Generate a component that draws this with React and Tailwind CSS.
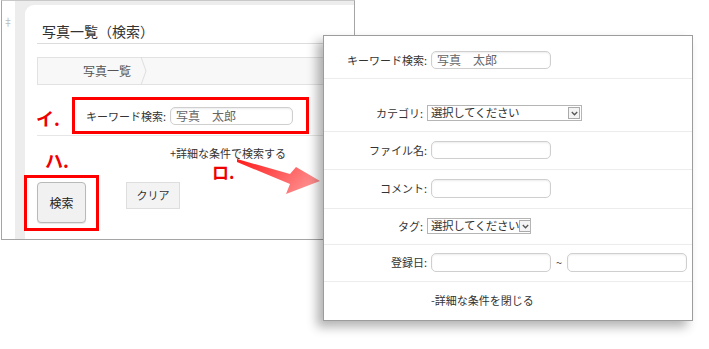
import React from "react";

const FONT = "font-['Noto_Sans_CJK_JP','Noto_Sans',sans-serif]";

function TextInput({ value = "", w = "w-[120px]", h = "h-[18px]" }) {
  return (
    <div
      className={`${w} ${h} rounded-[5px] border border-[#cfcfcf] bg-white shadow-[inset_0_1px_2px_rgba(0,0,0,0.08)] flex items-center pl-[5px] text-[12px] leading-none text-[#666] whitespace-nowrap`}
    >
      {value}
    </div>
  );
}

function Select({ w }) {
  return (
    <div
      className={`${w} h-[16px] border border-[#b5b5b5] bg-white flex items-center justify-between pl-[3px] pr-[1px] text-[11.5px] leading-none text-[#333] whitespace-nowrap overflow-hidden`}
    >
      <span className="tracking-[-0.4px]">選択してください</span>
      <span className="shrink-0 w-[12px] h-[12px] border border-[#aaa] bg-[#f4f4f4] flex items-center justify-center">
        <svg width="7" height="5" viewBox="0 0 7 5">
          <path d="M0.8 1 L3.5 3.8 L6.2 1" fill="none" stroke="#555" strokeWidth="1.3" />
        </svg>
      </span>
    </div>
  );
}

function Row({ label, children, cls, labelW = "w-[103px]" }) {
  return (
    <div className={`flex items-center border-b border-[#ececec] ${cls}`}>
      <div className={`${labelW} text-right text-[11px] leading-none text-[#333] whitespace-nowrap`}>{label}</div>
      <div className="ml-[4px] flex items-center">{children}</div>
    </div>
  );
}

export default function App() {
  return (
    <div className={`relative w-[709px] h-[349px] bg-white overflow-hidden ${FONT}`}>
      {/* Left window */}
      <div className="ml-[1px] w-[354px] h-[240px] border border-[#a5a5a5] border-t-[#c8c8c8] bg-[#ededed] flex">
        <div className="w-[13px] bg-white pt-[16px] pl-[1px] text-[10px] leading-none text-[#bbb]">‡</div>
        <div className="w-[10px] bg-[#ededed]" />
        <div className="flex-1 mt-[4px] bg-white rounded-tl-[9px] pl-[12px] flex flex-col">
          <div className="pt-[16px] pb-[2px] pl-[5px] border-b border-[#dcdcdc] text-[14px] leading-[20px] text-[#333]">
            写真一覧（検索）
          </div>
          <div className="relative mt-[13px] h-[28px] border border-[#e2e2e2] bg-[#f8f8f8] flex items-center pl-[45px] text-[12px] text-[#555]">
            写真一覧
            <svg className="absolute left-[102px] top-[-1px]" width="8" height="28" viewBox="0 0 8 28">
              <path d="M1 0 L6 14 L1 28" fill="none" stroke="#dedede" strokeWidth="1" />
            </svg>
          </div>
          <div className="h-[51px] pt-[12px] border-b border-[#e6e6e6] flex items-center pl-[49px]">
            <span className="text-[11px] leading-none text-[#333]">キーワード検索:</span>
            <div className="ml-[4px]">
              <TextInput value="写真　太郎" w="w-[123px]" />
            </div>
          </div>
          <div className="pt-[9px] pl-[133px] text-[11px] leading-[16px] text-[#333]">+詳細な条件で検索する</div>
          <div className="mt-[21px] flex items-start">
            <div className="w-[49px] h-[41px] rounded-[4px] border border-[#b9b9b9] bg-[#f1f1f1] flex items-center justify-center text-[12px] text-[#222] shadow-[0_1px_1px_rgba(0,0,0,0.1)]">
              検索
            </div>
            <div className="ml-[40px] w-[54px] h-[27px] border border-[#dedede] bg-[#f3f3f3] flex items-center justify-center text-[11px] text-[#333]">
              クリア
            </div>
          </div>
        </div>
      </div>

      {/* Annotations */}
      <div className="absolute left-[72px] top-[97px] w-[237px] h-[37px] border-[3px] border-[#ff0000]" />
      <div className="absolute left-[24px] top-[175px] w-[75px] h-[56px] border-[3px] border-[#ff0000]" />
      <div className="absolute left-[36px] top-[108px] text-[18px] leading-[20px] font-bold text-[#ee0000]">イ.</div>
      <div className="absolute left-[45px] top-[150px] text-[18px] leading-[20px] font-bold text-[#ee0000]">ハ.</div>
      <div className="absolute left-[212px] top-[162px] text-[17px] leading-[20px] font-bold text-[#ee0000]">ロ.</div>
      <svg className="absolute left-[230px] top-[150px]" width="100" height="50" viewBox="0 0 100 50">
        <defs>
          <linearGradient id="ag" x1="0" y1="0" x2="1" y2="0.4">
            <stop offset="0" stopColor="#ff1a1a" />
            <stop offset="1" stopColor="#ff8a8a" />
          </linearGradient>
        </defs>
        <polygon points="7,9 60,24 66,17 90,31 56,44 60,34 7,12" fill="url(#ag)" />
      </svg>

      {/* Right panel */}
      <div className="absolute left-[323px] top-[35px] w-[370px] h-[286px] border border-[#9c9c9c] bg-white shadow-[-6px_6px_10px_rgba(0,0,0,0.3)] flex flex-col">
        <Row label="キーワード検索:" cls="pt-[15px] pb-[9px]">
          <TextInput value="写真　太郎" />
        </Row>
        <Row label="カテゴリ:" cls="pt-[26px] pb-[10px]" labelW="w-[99px]">
          <Select w="w-[155px]" />
        </Row>
        <Row label="ファイル名:" cls="pt-[9px] pb-[10px]">
          <TextInput />
        </Row>
        <Row label="コメント:" cls="pt-[9px] pb-[10px]">
          <TextInput h="h-[19px]" />
        </Row>
        <Row label="タグ:" cls="pt-[9px] pb-[10px]" labelW="w-[99px]">
          <Select w="w-[104px]" />
        </Row>
        <Row label="登録日:" cls="pt-[8px] pb-[9px]">
          <TextInput h="h-[19px]" />
          <span className="mx-[5px] text-[11px] text-[#444]">~</span>
          <TextInput h="h-[19px]" />
        </Row>
        <div className="flex-1 flex items-center pl-[107px] pb-[2px] text-[11px] text-[#333]">-詳細な条件を閉じる</div>
      </div>
    </div>
  );
}
